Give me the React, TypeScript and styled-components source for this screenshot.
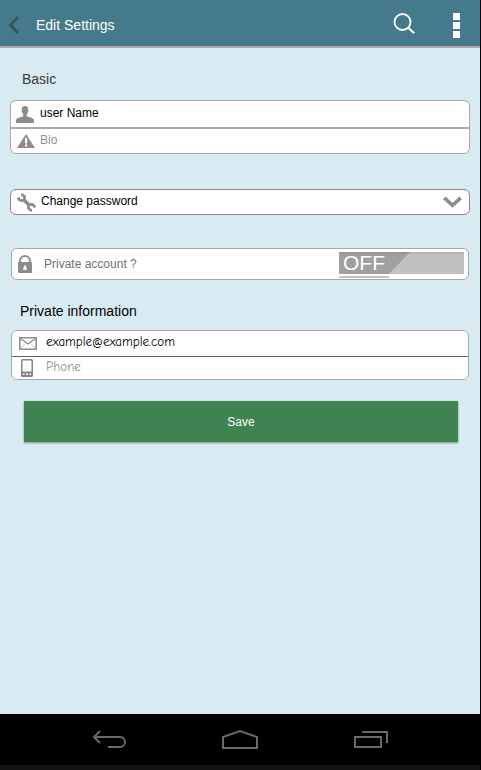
import React, { useState } from "react";
import styled, { createGlobalStyle } from "styled-components";

const GlobalStyle = createGlobalStyle`
  *, *::before, *::after { box-sizing: border-box; }
  body { margin: 0; background: #000; font-family: "Liberation Sans", Arial, sans-serif; }
  button, input { font: inherit; margin: 0; padding: 0; border: 0; background: none; }
  button { cursor: pointer; }
  svg { display: block; flex: none; }
`;

const Screen = styled.div`
  min-height: 100vh;
  display: flex;
  flex-direction: column;
  background: #d8ebf2;
  border-right: 1px solid #000;
`;

const Header = styled.header`
  height: 48px;
  flex: none;
  display: flex;
  align-items: center;
  padding: 4px 20px 0 8px;
  background: #447a8b;
  border-bottom: 2px solid #b0abad;
`;

const IconButton = styled.button`
  display: flex;
  align-items: center;
  justify-content: center;
`;

const Title = styled.h1`
  flex: 1;
  margin: 0 0 0 16px;
  font-size: 14px;
  line-height: 20px;
  font-weight: 400;
  color: #fff;
`;

const Actions = styled.div`
  display: flex;
  align-items: center;
  gap: 36px;
`;

const Form = styled.form`
  flex: 1;
  display: flex;
  flex-direction: column;
  padding: 20px 10px;
`;

const SectionTitle = styled.h2`
  margin: 0;
  padding: 0 12px;
  font-size: 14px;
  line-height: 22px;
  font-weight: 400;
  color: #3a3a3a;
`;

const PrivateTitle = styled(SectionTitle)`
  margin-top: 20px;
  padding: 0 10px;
  color: #000;
`;

const Card = styled.div<{ $top: number; $inset?: boolean }>`
  margin: ${(p) => p.$top}px ${(p) => (p.$inset ? 1 : 0)}px 0;
  background: #fff;
  border: 1px solid #a9a9a9;
  border-radius: 6px;
`;

const Row = styled.label<{ $height: number; $gap: number; $left?: number; $divider?: string }>`
  display: flex;
  align-items: center;
  height: ${(p) => p.$height}px;
  gap: ${(p) => p.$gap}px;
  padding: 0 4px 0 ${(p) => p.$left || 5}px;
  border-bottom: ${(p) => p.$divider || "0"};
`;

const TextInput = styled.input<{ $hand?: boolean }>`
  flex: 1;
  min-width: 0;
  height: 18px;
  margin-bottom: ${(p) => (p.$hand ? 4 : 2)}px;
  outline: none;
  color: #000;
  font-size: ${(p) => (p.$hand ? 13 : 12)}px;
  ${(p) => p.$hand && `font-family: "Comic Sans MS", "Comic Neue", Lato, sans-serif;`}
  &::placeholder { color: #909090; opacity: 1; }
`;

const PasswordButton = styled.button`
  display: flex;
  align-items: center;
  height: 26px;
  margin-top: 35px;
  padding: 0 7px 0 6px;
  gap: 5px;
  background: #fff;
  border: 1px solid #888;
  border-radius: 6px;
  font-size: 12px;
  text-align: left;
  color: #000;
`;

const ButtonText = styled.span`
  flex: 1;
  padding-bottom: 2px;
`;

const Question = styled.span`
  flex: 1;
  font-size: 12px;
  color: #707070;
`;

const Switch = styled.span`
  position: relative;
  width: 125px;
  height: 26px;
  margin-top: 2px;
  flex: none;
`;

const SwitchInput = styled.input`
  position: absolute;
  inset: 0;
  width: 100%;
  height: 100%;
  opacity: 0;
  cursor: pointer;
`;

const Track = styled.span`
  display: block;
  height: 22px;
  background: #c1c1c1;
  border-top: 2px solid #b3b3b3;
`;

const Thumb = styled.span`
  display: block;
  width: 71px;
  height: 22px;
  margin-top: -2px;
  padding-left: 4px;
  background: #a0a0a0;
  border-top: 2px solid #969696;
  clip-path: polygon(0 0, 100% 0, 50px 100%, 0 100%);
  font-size: 21px;
  line-height: 18px;
  color: #fff;
`;

const Underline = styled.span`
  display: block;
  width: 50px;
  height: 2px;
  margin-top: 2px;
  background: #c1c1c1;
`;

const SaveButton = styled.button`
  height: 41px;
  margin: 21px 12px 0 14px;
  background: #3f8351;
  color: #fff;
  font-size: 12px;
  box-shadow: 0 1px 2px #888;
`;

const NavBar = styled.nav`
  flex: none;
  height: 56px;
  display: flex;
  align-items: center;
  justify-content: space-between;
  padding: 0 92px;
  background: #000;
  border-bottom: 5px solid #141414;
`;

const UserIcon = () => (
  <svg width="18" height="17" viewBox="0 0 18 17">
    <path fill="#8c8c8c" d="M9 0C6.700 0 5.600 1.500 5.700 4c0 2 .8 3.600 1.600 4.300v2L2 12C.6 12.500 0 13.200 0 14.500V17h18v-2.500c0-1.300-.6-2-2-2.500l-5.300-1.700v-2c.8-.7 1.600-2.300 1.600-4.300C12.400 1.500 11.300 0 9 0z" />
  </svg>
);

const WarningIcon = () => (
  <svg width="18" height="14" viewBox="0 0 18 14">
    <path fill="#8c8c8c" fillRule="evenodd" d="M9 0l9 14H0L9 0zM8 4v5.500h2.200V4zM8 10.500v2h2.200v-2z" />
  </svg>
);

const WrenchIcon = () => (
  <svg width="19" height="19" viewBox="0 0 19 19">
    <g fill="none" stroke="#8c8c8c">
      <path strokeWidth="3.400" d="M6.500 6.500l6 6" />
      <path strokeWidth="2.800" d="M4 1.700c2.500 0 4 1.800 3.600 3.800S4.500 8.500 2 6.500L1.200 4.600" />
      <path strokeWidth="2.800" d="M15 17.300c-2.500 0-4-1.800-3.600-3.800s3.100-3 5.600-1l.8 1.900" />
    </g>
  </svg>
);

const LockIcon = () => (
  <svg width="14" height="18" viewBox="0 0 14 18">
    <path fill="none" stroke="#8c8c8c" strokeWidth="2" d="M2 9V6a5 5 0 0 1 10 0v3" />
    <path fill="#8c8c8c" fillRule="evenodd" d="M1 7h12a1 1 0 0 1 1 1v9a1 1 0 0 1-1 1H1a1 1 0 0 1-1-1V8a1 1 0 0 1 1-1zm6 2.500L5.300 13v2h3.400v-2z" />
  </svg>
);

const MailIcon = () => (
  <svg width="18" height="13" viewBox="0 0 18 13">
    <g fill="none" stroke="#8c8c8c">
      <path strokeWidth="1.600" d="M.8.8h16.400v11.400H.8z" />
      <path strokeWidth="1.400" d="M1.500 1.500L9 7l7.500-5.500" />
      <path strokeWidth="1" stroke="#c4c4c4" d="M1.500 11.500L6 6.500M16.500 11.500L12 6.500" />
    </g>
  </svg>
);

const PhoneIcon = () => (
  <svg width="18" height="18" viewBox="0 0 18 18">
    <rect x="2" y="0" width="12" height="18" rx="1.500" fill="#858585" />
    <path fill="#fff" d="M3.500 1.500h9v11h-9zM4 14.500h1.500V16H4zM7 14.500h2V16H7zM10.500 14.500H12V16h-1.500z" />
  </svg>
);

export default function App() {
  const [isPrivate, setIsPrivate] = useState(false);
  return (
    <Screen>
      <GlobalStyle />
      <Header>
        <IconButton aria-label="Back">
          <svg width="12" height="18" viewBox="0 0 12 18">
            <path fill="none" stroke="#3c505a" strokeWidth="2.600" d="M10 1L2.500 9l7.500 8" />
          </svg>
        </IconButton>
        <Title>Edit Settings</Title>
        <Actions>
          <IconButton aria-label="Search">
            <svg width="24" height="24" viewBox="0 0 24 24">
              <g fill="none" stroke="#fff" strokeWidth="1.800">
                <circle cx="9.500" cy="9" r="8" />
                <path strokeWidth="2.200" d="M15.300 14.800l5.900 5.400" />
              </g>
            </svg>
          </IconButton>
          <IconButton aria-label="More options">
            <svg width="7" height="25" viewBox="0 0 7 25">
              <path fill="#fff" d="M0 0h7v7H0zM0 9h7v7H0zM0 18h7v7H0z" />
            </svg>
          </IconButton>
        </Actions>
      </Header>

      <Form onSubmit={(e) => e.preventDefault()}>
        <SectionTitle>Basic</SectionTitle>
        <Card $top={10}>
          <Row $height={28} $gap={6} $divider="2px solid #a9a9a9">
            <UserIcon />
            <TextInput aria-label="User name" defaultValue="user Name" />
          </Row>
          <Row $height={24} $gap={5} $left={6}>
            <WarningIcon />
            <TextInput aria-label="Bio" placeholder="Bio" />
          </Row>
        </Card>

        <PasswordButton type="button">
          <WrenchIcon />
          <ButtonText>Change password</ButtonText>
          <svg width="19" height="12" viewBox="0 0 19 12">
            <path fill="none" stroke="#8c8c8c" strokeWidth="3.600" d="M1.300 1.800l8.200 7.500 8.200-7.500" />
          </svg>
        </PasswordButton>

        <Card $top={33} $inset>
          <Row $height={30} $gap={12} $left={6}>
            <LockIcon />
            <Question>Private account ?</Question>
            <Switch>
              <SwitchInput
                type="checkbox"
                checked={isPrivate}
                onChange={(e) => setIsPrivate(e.target.checked)}
              />
              <Track>
                <Thumb>{isPrivate ? "ON" : "OFF"}</Thumb>
              </Track>
              <Underline />
            </Switch>
          </Row>
        </Card>

        <PrivateTitle>Private information</PrivateTitle>
        <Card $top={8} $inset>
          <Row $height={26} $gap={9} $left={7} $divider="1px solid #606060">
            <MailIcon />
            <TextInput $hand type="email" aria-label="Email" defaultValue="example@example.com" />
          </Row>
          <Row $height={22} $gap={9} $left={7}>
            <PhoneIcon />
            <TextInput $hand type="tel" aria-label="Phone" placeholder="Phone" />
          </Row>
        </Card>

        <SaveButton type="submit">Save</SaveButton>
      </Form>

      <NavBar aria-label="System">
        <IconButton aria-label="Back">
          <svg width="34" height="19" viewBox="0 0 34 19">
            <path fill="none" stroke="#6a6a6a" strokeWidth="2" d="M8 1L2 7l6 6M2 7h26a5 5 0 0 1 0 10H16" />
          </svg>
        </IconButton>
        <IconButton aria-label="Home">
          <svg width="38" height="21" viewBox="0 0 38 21">
            <path fill="none" stroke="#6a6a6a" strokeWidth="2" d="M2 19V8l17-6 17 6v11z" />
          </svg>
        </IconButton>
        <IconButton aria-label="Recent apps">
          <svg width="34" height="17" viewBox="0 0 34 17">
            <path fill="none" stroke="#6a6a6a" strokeWidth="2" d="M1 6h26v10H1zM8 1h25v11" />
          </svg>
        </IconButton>
      </NavBar>
    </Screen>
  );
}
